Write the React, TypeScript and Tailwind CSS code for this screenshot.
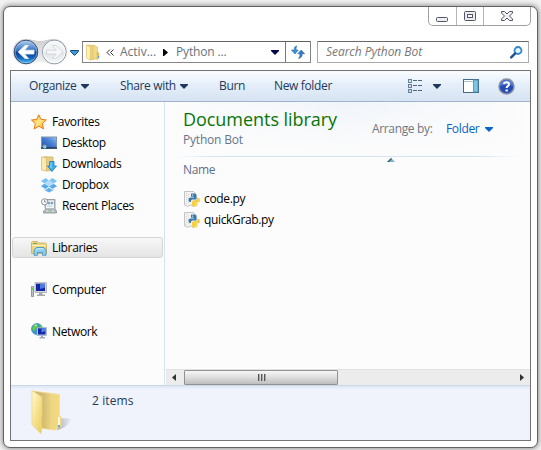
import type { ReactNode } from "react";

type P = { className?: string };

function Down({ className = "" }: P) {
  return (
    <svg width="8" height="5" viewBox="0 0 8 5" className={`block shrink-0 ${className}`}>
      <path d="M0 0H8V1L4 5L0 1Z" fill="currentColor" />
    </svg>
  );
}

function NavButtons() {
  return (
    <svg width="70" height="30" viewBox="11 37 70 30" className="block shrink-0">
      <defs>
        <linearGradient id="back" x1="0" y1="0" x2="0" y2="1">
          <stop offset="0" stopColor="#b9d2ee" />
          <stop offset=".25" stopColor="#6a9bd6" />
          <stop offset=".47" stopColor="#2f68b6" />
          <stop offset=".5" stopColor="#0a3a8e" />
          <stop offset=".75" stopColor="#1464bd" />
          <stop offset="1" stopColor="#4fc9f5" />
        </linearGradient>
        <linearGradient id="fwd" x1="0" y1="0" x2="0" y2="1">
          <stop offset="0" stopColor="#f8f9fa" />
          <stop offset=".5" stopColor="#eceef0" />
          <stop offset=".52" stopColor="#dfe2e5" />
          <stop offset="1" stopColor="#f8fafb" />
        </linearGradient>
        <linearGradient id="tray" x1="0" y1="0" x2="0" y2="1">
          <stop offset="0" stopColor="#b8babc" />
          <stop offset="1" stopColor="#eeeeee" />
        </linearGradient>
      </defs>
      <path d="M25.500 39C33 39 34 41 40 41S47 39 54 39A13 13 0 0 1 54 65C48 65 46 62 40 62S33 65 25.500 65A13 13 0 0 1 25.500 39Z" fill="url(#tray)" opacity=".7" />
      <circle cx="26" cy="52" r="11.800" fill="url(#back)" stroke="#344a72" />
      <circle cx="26" cy="52" r="10.800" fill="none" stroke="#b2d5f5" strokeOpacity=".5" />
      <path d="M18.200 52L25 45.500H28.500L24.600 50.200H34V54H24.600L28.500 58.500H25Z" fill="#fff" stroke="#e9f2fb" strokeWidth=".8" />
      <circle cx="54.300" cy="52" r="11.800" fill="url(#fwd)" stroke="#8a97a5" />
      <circle cx="54.300" cy="52" r="10.800" fill="none" stroke="#fff" />
      <path d="M62.800 52L55.800 45.500H52.200L56.400 50.200H46.500V54H56.400L52.200 58.500H55.800Z" fill="#f6f7f8" stroke="#cdd2d6" strokeWidth=".8" />
      <path d="M70.500 50.500H78.500V51.500L74.500 55.500L70.500 51.500Z" fill="#3f9ae0" stroke="#16477f" />
    </svg>
  );
}

function FolderArt() {
  return (
    <svg width="48" height="48" viewBox="0 0 48 48" className="block shrink-0 overflow-visible">
      <defs>
        <linearGradient id="fl" x1="0" y1="0" x2="1" y2="1">
          <stop offset="0" stopColor="#fffbd8" />
          <stop offset=".5" stopColor="#f6e28e" />
          <stop offset="1" stopColor="#ebcd5c" />
        </linearGradient>
        <linearGradient id="fr" x1="0" y1="0" x2="1" y2="0">
          <stop offset="0" stopColor="#c8af68" />
          <stop offset=".4" stopColor="#d5bd72" />
          <stop offset=".7" stopColor="#edd684" />
          <stop offset="1" stopColor="#f4db78" />
        </linearGradient>
        <linearGradient id="fs" x1="0" y1="0" x2="1" y2="0">
          <stop offset="0" stopColor="#9a9fab" stopOpacity=".8" />
          <stop offset="1" stopColor="#9a9fab" stopOpacity="0" />
        </linearGradient>
      </defs>
      <path d="M29 28C35 31 40 28 44 30C41 35 36 40 29 41Z" fill="url(#fs)" />
      <path d="M5 2L31.500 5.500V38L27 41L14 39.500Z" fill="url(#fr)" stroke="#f0dc93" strokeWidth=".7" />
      <path d="M4 1.500L14 8V26L13.500 29V43L12.500 44.500L4 35.500Z" fill="url(#fl)" stroke="#ead380" strokeWidth=".7" />
      <path d="M29 28Q33.500 25 33.500 30V38L29 40Z" fill="#f0d77a" />
      <path d="M31 28V37" stroke="#fff" strokeWidth="1.600" />
      <path d="M31 36V38.500" stroke="#5a9cf0" strokeWidth="1.800" />
    </svg>
  );
}

function SmallFolder() {
  return (
    <svg width="15" height="17" viewBox="0 0 15 17" className="block shrink-0">
      <path d="M1 1L9 1.500V15L4 16Z" fill="#ead17a" stroke="#d8bc64" strokeWidth=".7" />
      <path d="M.500 1L4.500 3V16L.500 14Z" fill="#fff0ad" stroke="#dfc46b" strokeWidth=".7" />
      <path d="M7 1.500L11.500 3V15.500L7 14Z" fill="#f2da86" stroke="#dfc46b" strokeWidth=".7" />
      <path d="M11 8L13 9V14L11 15Z" fill="#e0c673" stroke="#c5ac62" strokeWidth=".5" />
      <path d="M12.500 12V14" stroke="#549de5" strokeWidth="1" />
    </svg>
  );
}

function Refresh() {
  return (
    <svg width="14" height="15" viewBox="0 0 14 15" className="block">
      <path d="M6 1C4 1 3.200 2.500 3.200 4.500V5H.300L4 9L7.300 5H5.200C5 3 5.200 2 6 1Z" fill="#3793d5" stroke="#2262a8" strokeWidth=".5" />
      <path d="M7.500 13.500C10 13.200 11.300 11.500 11.200 8.800H13.700L10.200 5L6.700 8.800H9C9 11 8.600 12.400 7.500 13.500Z" fill="#347cc5" stroke="#22579f" strokeWidth=".5" />
    </svg>
  );
}

function Star() {
  return (
    <svg width="16" height="16" viewBox="0 0 16 16" className="block">
      <defs>
        <linearGradient id="star" x1="0" y1="0" x2="1" y2="1">
          <stop offset="0" stopColor="#ffa52c" />
          <stop offset=".5" stopColor="#ffe885" />
          <stop offset="1" stopColor="#fda81a" />
        </linearGradient>
      </defs>
      <path d="M7.800 .800L10 5.400L15.300 5.900L11.400 9.500L12.500 14.900L7.900 12.200L3.200 15L4.300 9.600L.500 6L5.700 5.400Z" fill="url(#star)" stroke="#e87919" strokeLinejoin="round" />
    </svg>
  );
}

function Desktop() {
  return (
    <svg width="16" height="16" viewBox="0 0 16 16" className="block">
      <defs>
        <linearGradient id="desk" x1="0" y1="1" x2="1" y2="0">
          <stop offset="0" stopColor="#1a49a5" />
          <stop offset=".6" stopColor="#4c84d8" />
          <stop offset="1" stopColor="#9fc4f0" />
        </linearGradient>
      </defs>
      <rect x=".500" y="2" width="15" height="11.500" fill="url(#desk)" stroke="#7f93ab" />
      <path d="M0 13H16" stroke="#273b57" strokeWidth="1.500" />
      <circle cx="3.500" cy="11.500" r="2" fill="#55c5f0" />
      <path d="M3 10H4V11H3Z" fill="#f6703c" />
      <path d="M3.500 11.500H5V13H3.500Z" fill="#ffe24a" />
    </svg>
  );
}

function Downloads() {
  return (
    <svg width="16" height="16" viewBox="0 0 16 16" className="block">
      <path d="M3 .800L12 1V14L5 15Z" fill="#e5cf88" stroke="#c7ad62" strokeWidth=".7" />
      <path d="M.500 .800L5.500 2V15L.500 14Z" fill="#faeaae" stroke="#d1b667" strokeWidth=".7" />
      <path d="M8.600 5.500H13V10H15.500L10.900 15.500L6.500 10H8.600Z" fill="#41afea" stroke="#147abb" strokeWidth=".8" />
      <path d="M10 6.500V12" stroke="#91d8f9" />
    </svg>
  );
}

function Dropbox() {
  return (
    <svg width="16" height="16" viewBox="0 0 16 16" className="block">
      <path d="M4.700 1L8 3.700L3.300 6.500L0 3.900ZM11.300 1L16 3.900L12.700 6.500L8 3.700Z" fill="#7fc3f3" />
      <path d="M3.300 6.700L8 9.300L4.700 12L0 9.200ZM12.700 6.700L16 9.200L11.300 12L8 9.300Z" fill="#56a9ea" />
      <path d="M3.300 6.500L8 3.700L12.700 6.500L8 9.300Z" fill="#b4dcfa" />
      <path d="M3.300 12.100L4.700 13L8 10.400L11.300 13L12.700 12.100V13L8 15.500L3.300 13Z" fill="#5fb0ec" />
    </svg>
  );
}

function Recent() {
  return (
    <svg width="16" height="16" viewBox="0 0 16 16" className="block">
      <path d="M3 1.500H14V11L15.500 13V15H2.500V13L4.500 11.500Z" fill="#b8bfc4" stroke="#8a9398" strokeWidth=".8" />
      <path d="M5 2.500H13V10H5Z" fill="#eff6fa" />
      <path d="M7 4H9V6H7ZM10 4H12V6H10ZM6 8H11" fill="#80a9c4" stroke="#87a4b7" strokeWidth=".5" />
      <path d="M5 12H13L14 14H4Z" fill="#e9eff1" stroke="#909b9d" strokeWidth=".6" />
      <path d="M7 12.800H11" stroke="#83b27a" />
      <circle cx="3.600" cy="3.800" r="3.100" fill="#f8fafb" stroke="#879298" />
      <path d="M3.600 1.900V4H5.200" fill="none" stroke="#637c8f" strokeWidth=".8" />
    </svg>
  );
}

function Libraries() {
  return (
    <svg width="16" height="16" viewBox="0 0 16 16" className="block">
      <path d="M.500 2.500L1.500 1.500H6.500L7.500 3H14.500L15.500 4V13.500H.500Z" fill="#edd47d" stroke="#cbae59" strokeWidth=".8" />
      <path d="M1 5.500H15" stroke="#fff1b8" />
      <path d="M2 3.500H6" stroke="#65ad62" />
      <path d="M3 15.300V10L5.500 7.500H13L15 10V15.300H11.500V12.500H6.500V15.300Z" fill="#8bcdf0" stroke="#3a91c7" strokeWidth=".8" />
      <path d="M4.500 10L6.500 8.800H12.500" fill="none" stroke="#d4f3ff" />
    </svg>
  );
}

function Computer() {
  return (
    <svg width="16" height="16" viewBox="0 0 16 16" className="block">
      <path d="M.500 4.500H2.500V14.500H.500Z" fill="#bec1c2" stroke="#818689" strokeWidth=".8" />
      <path d="M1 6H2.200V8H1Z" fill="#62d94b" />
      <path d="M4 .700H15.500V10.500H4Z" fill="#d7d9da" stroke="#9ba0a4" strokeWidth=".7" />
      <path d="M5 1.700H14V9H5Z" fill="#1424a8" />
      <path d="M9 1.700H14V5.500L9 7Z" fill="#4d78e0" />
      <path d="M8 10.500H11.500V12.500H14V14H6V12.500H8Z" fill="#a6aaac" />
    </svg>
  );
}

function Network() {
  return (
    <svg width="17" height="17" viewBox="0 0 17 17" className="block">
      <circle cx="6" cy="6" r="5.500" fill="#2d93d4" stroke="#247eb4" strokeWidth=".6" />
      <path d="M2 2.500L5 1L7.500 2L6 5L4.500 6L3 9L1 6ZM8 .800L11 3.500L9 5Z" fill="#5bc949" />
      <path d="M3 2L6 1.500L5 3.500Z" fill="#caf4c0" />
      <path d="M6 4.500H15.500V12.500H6Z" fill="#b7c9e7" stroke="#92a5be" strokeWidth=".6" />
      <path d="M7 5.300H14.500V11.500H7Z" fill="#1328ad" />
      <path d="M10.500 5.300H14.500V8L10.500 9.500Z" fill="#5284e8" />
      <path d="M10 12.500H12V14H14V15.500H8.500V14H10Z" fill="#9caabd" />
    </svg>
  );
}

function PythonFile() {
  return (
    <svg width="16" height="16" viewBox="0 0 16 16" className="block shrink-0">
      <path d="M.500 .500H9.500L12 3V14L9 15.500L7 13.800L4 15.300L.500 14Z" fill="#f3f3f3" stroke="#b6b6b6" strokeWidth=".8" />
      <path d="M2.500 2V13M4.500 3V12" stroke="#d4d4d4" strokeDasharray="1 1" />
      <path d="M7.300 2.500H10.500Q12.500 2.500 12.500 4.500V7.500Q12.500 8.500 11 8.500H8.500Q7 8.500 7 10V11H6Q4.500 11 4.500 8.700Q4.500 6.500 6.500 6.500H10V5.800H7V3Z" fill="#397bad" />
      <path d="M13 6.800H14.200Q16 6.800 16 9.300Q16 11.500 14 11.500H11V12.200H13.500V14Q13.500 15.500 10.800 15.500Q8 15.500 8 13.500V11Q8 9.300 9.700 9.300H11.500Q13 9.300 13 7.800Z" fill="#f6cf3e" />
      <circle cx="8.600" cy="4.100" r=".6" fill="#fff" />
      <circle cx="11.800" cy="14" r=".6" fill="#fff" />
    </svg>
  );
}

function SideItem({ icon, label, child = false, className = "" }: { icon: ReactNode; label: string; child?: boolean; className?: string }) {
  return (
    <div className={`flex h-[21px] items-center gap-[5px] whitespace-nowrap text-black ${child ? "pl-[30px]" : "pl-5"} ${className}`}>
      <span className="w-4 shrink-0">{icon}</span>
      <span>{label}</span>
    </div>
  );
}

function Caption() {
  return (
    <div className="ml-auto mr-[6px] flex h-[19px] w-[103px] shrink-0 rounded-b-[5px] border border-t-0 border-[#a0a0a0]">
      <span className="flex w-7 items-center justify-center border-r border-[#b5b5b5]">
        <svg width="13" height="15" viewBox="0 0 13 15"><rect x=".500" y="8.500" width="11" height="4" rx="1" fill="#eee" stroke="#53566b" /></svg>
      </span>
      <span className="flex w-[27px] items-center justify-center border-r border-[#b5b5b5]">
        <svg width="12" height="10" viewBox="0 0 12 10"><rect x=".500" y=".500" width="11" height="9" rx="1" fill="#ececec" stroke="#53566b" /><rect x="3.500" y="3.500" width="5" height="3" fill="#fff" stroke="#53566b" /></svg>
      </span>
      <span className="flex flex-1 items-center justify-center">
        <svg width="12" height="10" viewBox="0 0 12 10"><path d="M.500 .500H3.500L6 3L8.500 .500H11.500V2L8.500 5L11.500 8V9.500H8.500L6 7L3.500 9.500H.500V8L3.500 5L.500 2Z" fill="#f1f1f1" stroke="#53566b" /></svg>
      </span>
    </div>
  );
}

export default function App() {
  return (
    <div className="h-[450px] w-[541px] overflow-hidden bg-[#f2f2f2] pl-[3px] pt-[6px] text-[12px] font-normal tracking-[-0.35px]" style={{ fontFamily: '"Open Sans", "Noto Sans", sans-serif' }}>
      <div className="flex h-[442px] w-[535px] flex-col rounded-[7px] border border-[#626262] bg-white shadow-[0_0_5px_1px_#929292]">
        <Caption />
        <div className="mt-[11px] flex h-[30px] shrink-0 items-center pl-[7px]">
          <NavButtons />
          <div className="ml-px flex h-[22px] w-[229px] items-center border border-[#858585] border-t-[#626262] bg-white tracking-normal text-[#69727a]">
            <span className="ml-[3px]"><SmallFolder /></span>
            <svg className="ml-[5px]" width="8" height="7" viewBox="0 0 8 7"><path d="M4 .500L1 3.500L4 6.500M7.500 .500L4.500 3.500L7.500 6.500" stroke="#333" fill="none" /></svg>
            <span className="ml-[6px] w-[37px] whitespace-nowrap">Activ...</span>
            <svg className="ml-[6px]" width="5" height="7" viewBox="0 0 5 7"><path d="M0 0H1L5 3.500L1 7H0Z" fill="#000" /></svg>
            <span className="ml-[8px] w-[52px] whitespace-nowrap tracking-[-0.15px]">Python ...</span>
            <Down className="ml-[43px] text-[#06064e]" />
            <span className="ml-auto flex h-full w-[25px] items-center justify-center border-l border-[#777]"><Refresh /></span>
          </div>
          <div className="ml-[6px] flex h-[22px] w-[212px] items-center justify-between rounded-[1px] border border-[#aaa] border-t-[#696969] px-2 italic tracking-[-0.05px] text-[#777]">
            <span>Search Python Bot</span>
            <svg className="-mr-[3px]" width="13" height="13" viewBox="0 0 13 13"><circle cx="8" cy="4.500" r="3.500" fill="#e0f6ff" stroke="#3587c6" strokeWidth="1.800" /><path d="M5.200 7.300L1.200 11.300" stroke="#234f96" strokeWidth="2.500" strokeLinecap="round" /></svg>
          </div>
        </div>
        <main className="ml-[6px] mt-[3px] flex h-[371px] w-[521px] shrink-0 flex-col border border-[#747474] bg-[#fcfcfc]">
          <div className="flex h-[31px] shrink-0 items-center border-b border-[#a0b2cc] bg-gradient-to-b from-[#fafcff] via-[#e5effa] via-45% to-[#d7e3f3] pl-[18px] text-[#1e395b]">
            <span className="w-[47px]">Organize</span>
            <Down className="ml-[5px]" />
            <span className="ml-[31px] w-[55px] whitespace-nowrap">Share with</span>
            <Down className="ml-[5px]" />
            <span className="ml-[31px] w-[25px]">Burn</span>
            <span className="ml-[30px] w-[60px] whitespace-nowrap">New folder</span>
            <svg className="ml-[74px]" width="16" height="14" viewBox="0 0 16 14">
              {[0, 5, 10].map((y, i) => <g key={y}><rect x=".500" y={y + .5} width="3" height="3" fill="#fff" stroke="#6682a1" /><path d={`M1.500 ${y + 2}H2.500`} stroke={["#4499d5", "#d43a38", "#37556d"][i]} /><path d={`M5 ${y + 1.5}H9M10 ${y + 1.5}H14`} stroke="#496680" /></g>)}
            </svg>
            <Down className="ml-[9px]" />
            <svg className="ml-[22px]" width="16" height="14" viewBox="0 0 16 14"><rect x=".500" y=".500" width="15" height="13" fill="#fff" stroke="#456988" /><path d="M1 2.500H10" stroke="#a9c1d2" /><rect x="10.500" y="1" width="4.500" height="12" fill="#7bc8e6" stroke="#548aaa" strokeWidth=".8" /></svg>
            <svg className="ml-[19px]" width="17" height="17" viewBox="0 0 17 17"><circle cx="8.500" cy="8.500" r="7.500" fill="#254bb5" stroke="#8992a3" strokeWidth="1.500" /><path d="M2 8Q2 2 8.500 2Q15 2 15 8Q11 5 2 8Z" fill="#7ca0e3" opacity=".55" /><path d="M6 6C6 3.500 11 3.500 11 6.200C11 8.200 8.600 8 8.600 10" fill="none" stroke="#fff" strokeWidth="2" /><path d="M7.500 11.500H9.800V13.500H7.500Z" fill="#fff" /></svg>
          </div>
          <div className="flex h-[283px] shrink-0">
            <aside className="w-[154px] shrink-0 border-r border-[#d3e5f7] pt-[9px]">
              <SideItem icon={<Star />} label="Favorites" />
              <SideItem icon={<Desktop />} label="Desktop" child />
              <SideItem icon={<Downloads />} label="Downloads" child />
              <SideItem icon={<Dropbox />} label="Dropbox" child />
              <SideItem icon={<Recent />} label="Recent Places" child />
              <SideItem icon={<Libraries />} label="Libraries" className="ml-px mt-[21px] w-[151px] rounded-[3px] border border-[#d5d5d5] bg-gradient-to-b from-[#f7f7f7] to-[#e5e5e5] pl-[18px]!" />
              <SideItem icon={<Computer />} label="Computer" className="mt-[21px]" />
              <SideItem icon={<Network />} label="Network" className="mt-[21px]" />
            </aside>
            <section className="flex min-w-0 flex-1 flex-col">
              <header className="h-[54px] bg-gradient-to-r from-[#fcfcfc] via-[#f1f5fa] to-[#fcfcfc]">
                <div className="flex h-full bg-gradient-to-b from-transparent to-[#fcfcfc] pl-[18px]">
                  <div className="w-[189px] whitespace-nowrap">
                    <h1 className="mt-[4px] h-[26px] text-[18px] leading-[26px] tracking-[-0.05px] text-[#087508]">Documents library</h1>
                    <div className="h-4 leading-4 tracking-[-0.2px] text-[#68758c]">Python Bot</div>
                  </div>
                  <div className="mt-[17px] flex h-5 items-center whitespace-nowrap">
                    <span className="w-[61px]  text-[#717780]">Arrange by:</span>
                    <span className="ml-[13px] w-[34px] text-[#0865ca]">Folder</span>
                    <Down className="ml-[5px] text-[#0865ca]" />
                  </div>
                </div>
              </header>
              <div className="ml-[13px] flex h-px w-[341px]">
                <span className="w-8 bg-gradient-to-r from-transparent to-[#d6e4f1]" />
                <span className="flex-1 bg-[#d6e4f1]" />
                <span className="w-10 bg-gradient-to-r from-[#d6e4f1] to-transparent" />
              </div>
              <svg className="ml-[222px] mt-px block" width="8" height="4" viewBox="0 0 8 4"><path d="M0 4L4 0L8 4Z" fill="#7caec5" /><path d="M0 4L4 0L5 1L2 4Z" fill="#37637a" /></svg>
              <div className="ml-[18px] h-[17px] leading-[16px] text-[#61708a]">Name</div>
              <div className="ml-[19px] mt-[9px] text-black">
                <div className="flex h-[21px] items-center gap-[4px]"><PythonFile /><span>code.py</span></div>
                <div className="flex h-[21px] items-center gap-[4px]"><PythonFile /><span>quickGrab.py</span></div>
              </div>
              <div className="ml-px mt-auto flex h-4 items-center border-t border-[#e2e2e2] bg-[#ececec]">
                <svg className="ml-[6px]" width="4" height="7" viewBox="0 0 4 7"><path d="M4 0V7L0 3.500Z" fill="#333" /></svg>
                <span className="ml-2 flex h-[15px] w-[154px] items-center justify-center gap-[2px] rounded-[1px] border border-[#929292] bg-gradient-to-b from-[#f7f7f7] via-[#dddddd] to-[#bebebe]">
                  {[0, 1, 2].map(i => <i key={i} className="h-[7px] w-[1px] bg-[#555] shadow-[1px_0_#aaa]" />)}
                </span>
                <svg className="ml-auto mr-[6px]" width="4" height="7" viewBox="0 0 4 7"><path d="M0 0V7L4 3.500Z" fill="#333" /></svg>
              </div>
            </section>
          </div>
          <footer className="flex flex-1 border-t border-[#cad8e8] bg-[#f0f3fc] shadow-[inset_0_2px_2px_#dfe8f5]">
            <div className="ml-[17px] mt-[3px]"><FolderArt /></div>
            <span className="ml-[16px] mt-[6px] h-[18px] leading-[18px] tracking-[0.1px] text-[#1e395b]">2 items</span>
          </footer>
        </main>
      </div>
    </div>
  );
}
